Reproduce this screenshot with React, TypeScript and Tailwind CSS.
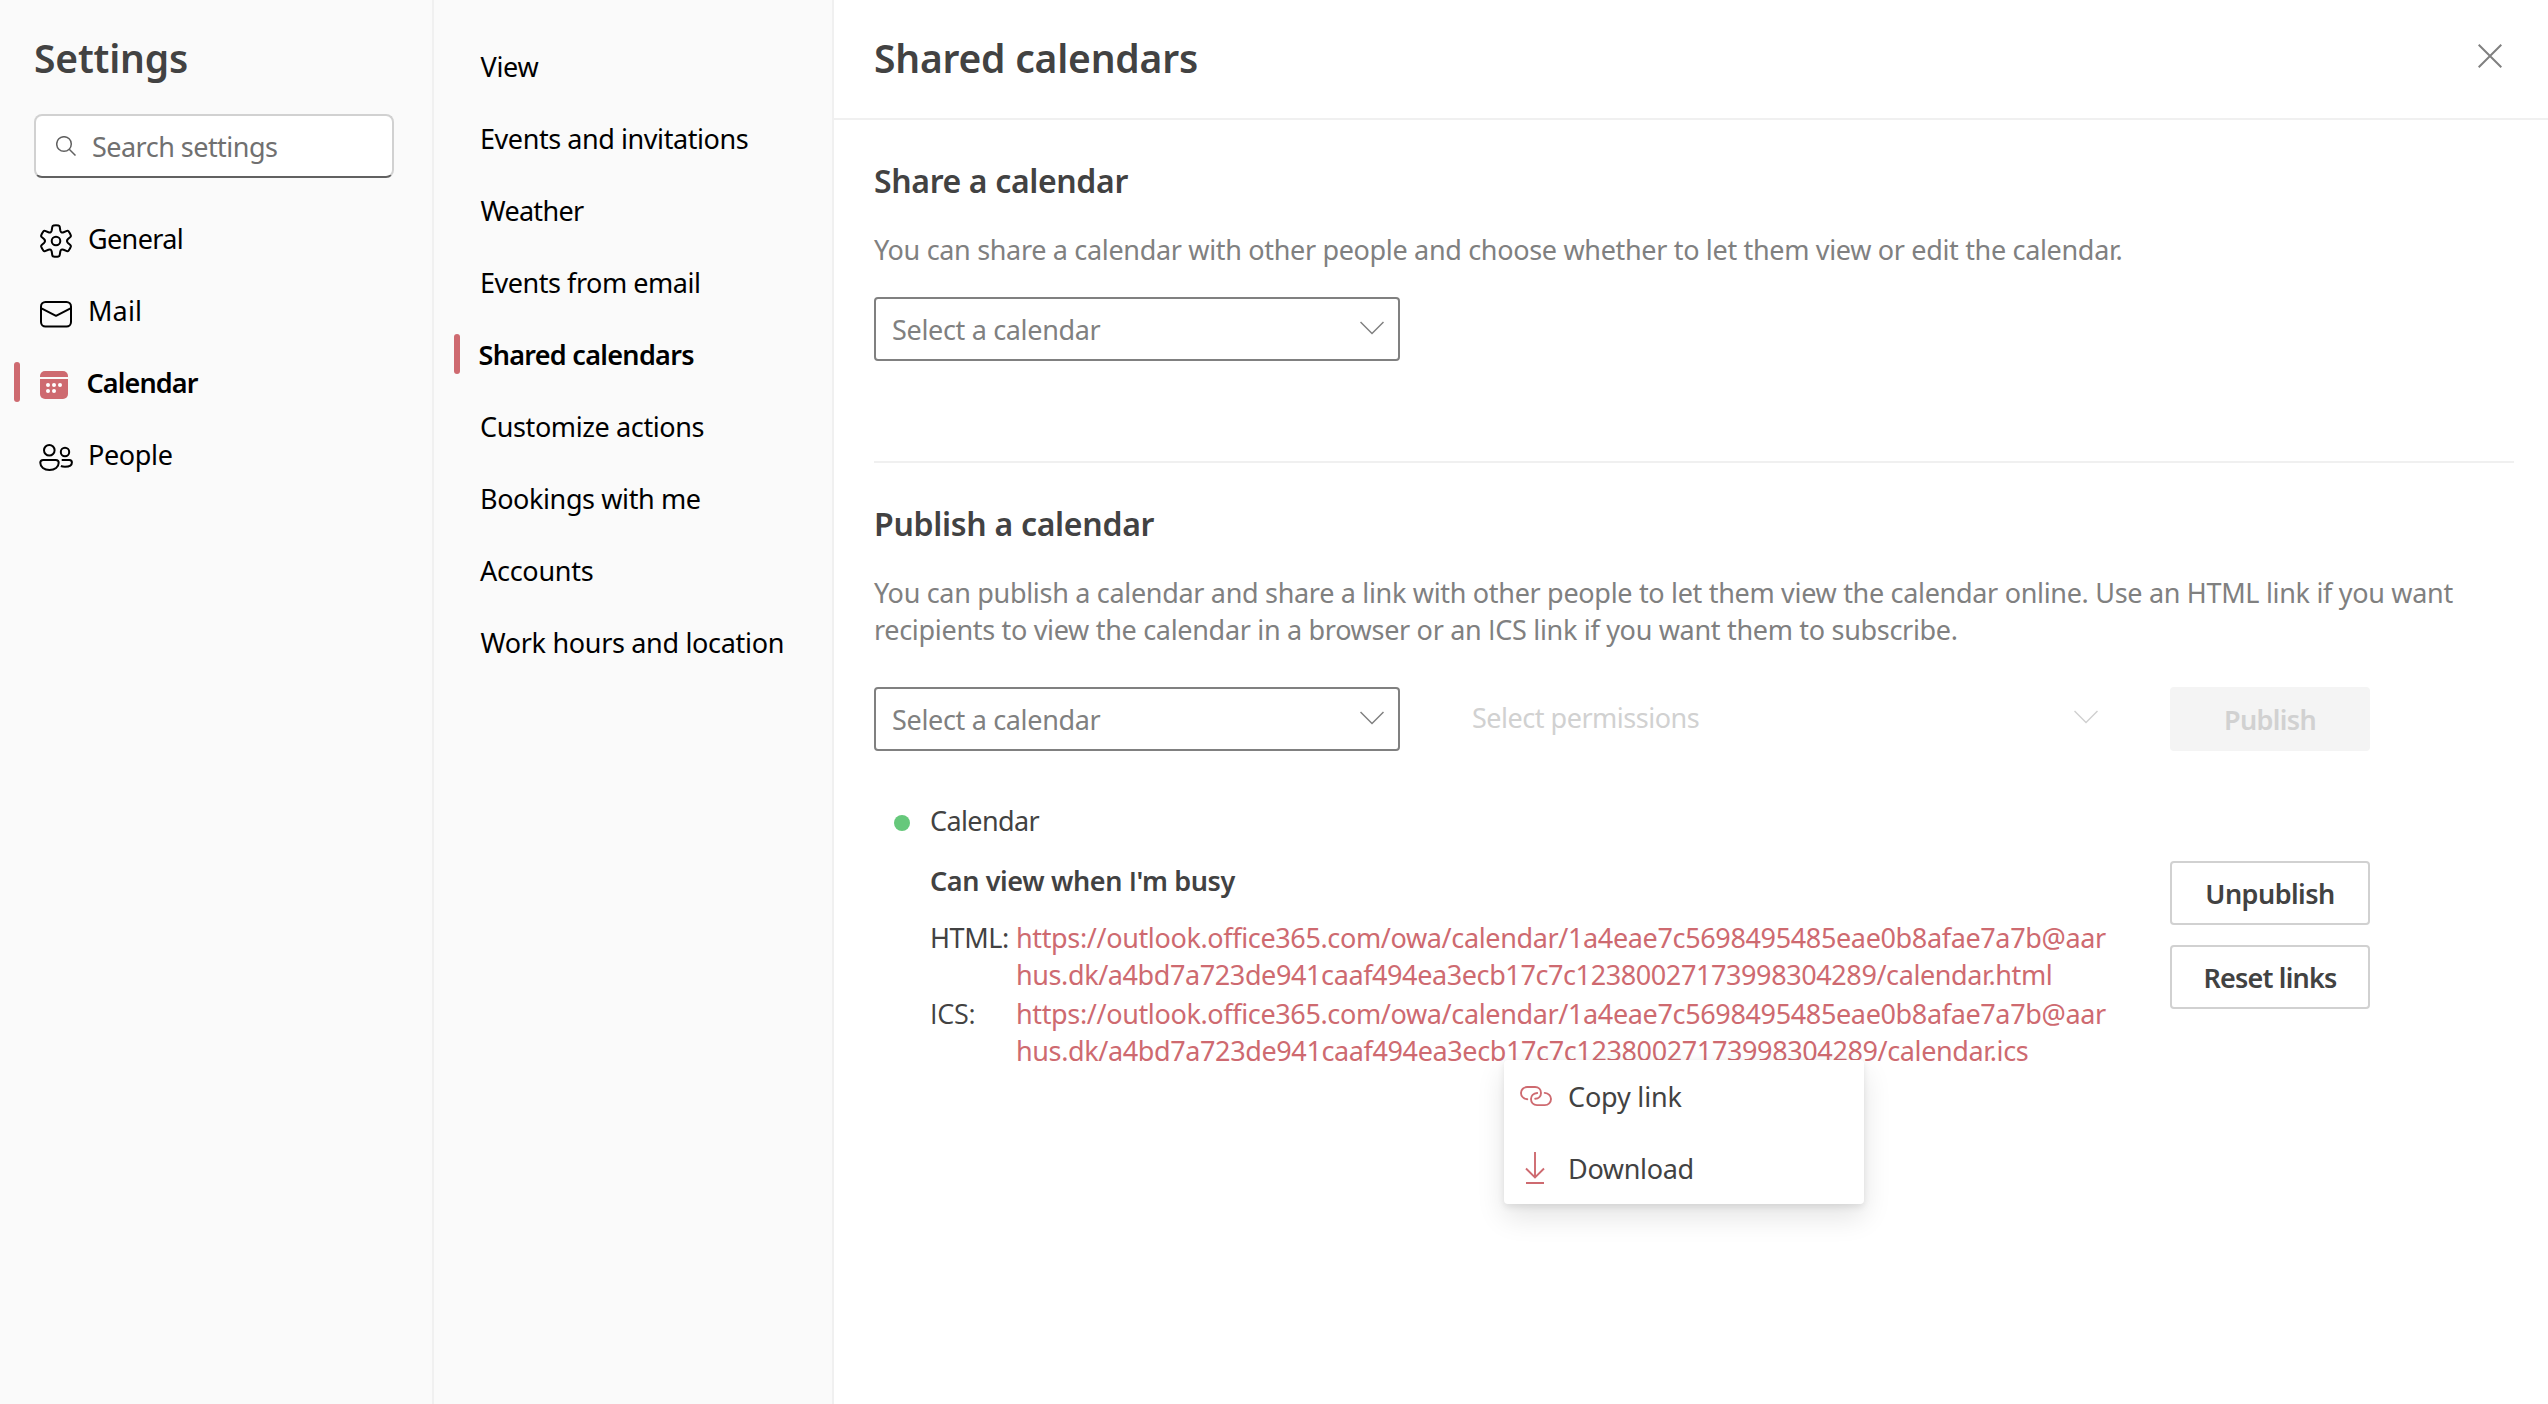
import type { ReactNode } from 'react';

const RED = '#ce6a70';

function GearIcon() {
  return (
    <svg width="40" height="40" viewBox="0 0 40 40" fill="none" stroke="#000" strokeWidth="2" strokeLinejoin="round">
      <path d="M17.5 4.500Q20 4 22.500 4.500Q23.500 4.700 23.700 5.800L24.300 9.500Q24.900 12.200 27.600 11.200L30.900 9.900Q31.900 9.500 32.600 10.400Q34 12.200 34.800 14.400Q35.100 15.400 34.300 16.100L32 18Q30 20 32 22L34.300 23.900Q35.100 24.600 34.800 25.600Q34 27.800 32.600 29.600Q31.900 30.500 30.900 30.100L27.600 28.800Q24.900 27.800 24.300 30.500L23.700 34.200Q23.500 35.300 22.500 35.500Q20 36 17.500 35.500Q16.500 35.300 16.300 34.200L15.700 30.500Q15.100 27.800 12.400 28.800L9.100 30.100Q8.100 30.500 7.400 29.600Q6 27.800 5.200 25.600Q4.900 24.600 5.700 23.900L8 22Q10 20 8 18L5.700 16.100Q4.900 15.400 5.200 14.400Q6 12.200 7.400 10.400Q8.100 9.500 9.100 9.900L12.400 11.200Q15.100 12.200 15.700 9.500L16.300 5.800Q16.500 4.700 17.500 4.500Z" />
      <circle cx="20" cy="20" r="4.300" />
    </svg>
  );
}

function MailIcon() {
  return (
    <svg width="40" height="40" viewBox="0 0 40 40" fill="none" stroke="#000" strokeWidth="2" strokeLinejoin="round">
      <rect x="5" y="9" width="30" height="24.5" rx="4.5" />
      <path d="M5 15.2L20 22.8L35 15.2" />
    </svg>
  );
}

function CalendarIcon() {
  return (
    <svg width="40" height="40" viewBox="0 0 40 40" fill={RED}>
      <path d="M4 12V11a5 5 0 0 1 5-5H27a5 5 0 0 1 5 5V12Z" />
      <path d="M4 14H32V29a5 5 0 0 1-5 5H9a5 5 0 0 1-5-5Z" />
      <g fill="#fff">
        <circle cx="12" cy="20" r="2" />
        <circle cx="18" cy="20" r="2" />
        <circle cx="24" cy="20" r="2" />
        <circle cx="12" cy="26" r="2" />
        <circle cx="18" cy="26" r="2" />
      </g>
    </svg>
  );
}

function PeopleIcon() {
  return (
    <svg width="40" height="40" viewBox="0 0 40 40" fill="none" stroke="#000" strokeWidth="2">
      <circle cx="13.3" cy="13.3" r="5.3" />
      <circle cx="29" cy="15" r="4.2" />
      <path d="M7.2 22.9H19.8a2.9 2.9 0 0 1 2.9 2.9C22.7 30 18.9 32.9 13.5 32.9S4.3 30 4.3 25.8A2.9 2.9 0 0 1 7.2 22.9Z" />
      <path d="M25.7 22.9H33.4a2.5 2.5 0 0 1 2.5 2.5C35.9 28.200 33.2 29.700 29 29.700C27.400 29.700 26 29.500 24.900 29" />
    </svg>
  );
}

function Chevron({ color }: { color: string }) {
  return (
    <svg width="24" height="14" viewBox="0 0 24 14" fill="none" stroke={color} strokeWidth="1.5">
      <path d="M0.500 1L12 12.500L23.500 1" />
    </svg>
  );
}

function CopyLinkIcon() {
  return (
    <svg className="mt-0.5" width="32" height="22" viewBox="0 0 32 22" fill="none" stroke={RED} strokeWidth="1.9" strokeLinecap="round">
      <path d="M7.300 13.200C3.500 12.800 1 10 1 7C1 3.600 3.700 1 7.200 1H15C18.600 1 21 3.600 21 7C21 10.200 18.600 12.600 15.200 12.800" />
      <path d="M24.700 6.900C28.500 7.200 31 10 31 13C31 16.400 28.300 19.100 24.800 19.100H17C13.400 19.100 11 16.400 11 13C11 9.800 13.400 7.300 17.200 7" />
    </svg>
  );
}

function DownloadIcon() {
  return (
    <svg width="32" height="34" viewBox="0 0 32 34" fill="none" stroke={RED} strokeWidth="1.9">
      <path d="M15 1V26.500M6 17.500L15 26.500L24 17.500M6 32H24" />
    </svg>
  );
}

/* Capital I without slab serifs */
function PlainI() {
  return <span className="font-['Open_Sans',sans-serif]">I</span>;
}

type Item = { label: string; text: string; icon?: ReactNode; active?: boolean };

const areas: Item[] = [
  { label: 'General', text: 'ml-[12px] tracking-[-0.643px]', icon: <GearIcon /> },
  { label: 'Mail', text: 'ml-[12px] tracking-[0.133px]', icon: <MailIcon /> },
  { label: 'Calendar', text: 'ml-[10.500px] tracking-[-0.869px]', icon: <CalendarIcon />, active: true },
  { label: 'People', text: 'ml-[12px] tracking-[-0.354px]', icon: <PeopleIcon /> },
];

const pages: Item[] = [
  { label: 'View', text: 'ml-[20.500px] tracking-[-0.285px]' },
  { label: 'Events and invitations', text: 'ml-[20px] tracking-[-0.432px]' },
  { label: 'Weather', text: 'ml-[20.500px] tracking-[-0.690px]' },
  { label: 'Events from email', text: 'ml-[20px] tracking-[-0.464px]' },
  { label: 'Shared calendars', text: 'ml-[18.500px] tracking-[-0.700px]', active: true },
  { label: 'Customize actions', text: 'ml-[20px] tracking-[-0.385px]' },
  { label: 'Bookings with me', text: 'ml-[20px] tracking-[-0.400px]' },
  { label: 'Accounts', text: 'ml-[20px] tracking-[-0.275px]' },
  { label: 'Work hours and location', text: 'ml-[20.500px] tracking-[-0.320px]' },
];

function NavRow({ item }: { item: Item }) {
  return (
    <li className="flex h-[72px] items-center">
      <span className={item.active ? 'h-10 w-1.5 shrink-0 rounded-full bg-[#ce6a70]' : 'h-10 w-1.5 shrink-0'} />
      {item.icon && <span className="ml-4 mt-1.5 shrink-0">{item.icon}</span>}
      <span className={`pt-px whitespace-nowrap ${item.active ? 'font-semibold' : ''} ${item.text}`}>{item.label}</span>
    </li>
  );
}

function CalendarSelect() {
  return (
    <button className="flex h-16 w-[526px] shrink-0 items-center justify-between rounded border-2 border-[#808080] bg-white pt-px pr-3.5 pl-4 text-[#808080]">
      <span className="tracking-[-0.330px]">Select a calendar</span>
      <span className="-mt-1">
        <Chevron color="#808080" />
      </span>
    </button>
  );
}

function OutlineButton({ children }: { children: ReactNode }) {
  return (
    <button className="flex h-16 w-[200px] items-center justify-center rounded border-2 border-[#d1d1d1] bg-white pt-px font-semibold text-[#424242]">
      {children}
    </button>
  );
}

function LinkMenu() {
  return (
    <div className="absolute top-[65px] left-[488px] w-[360px] rounded bg-white tracking-normal text-[#424242] shadow-[0_12.8px_28.8px_rgba(0,0,0,0.11),0_2.4px_7.2px_rgba(0,0,0,0.09)]">
      <div className="flex h-[72px] items-center pl-4">
        <CopyLinkIcon />
        <span className="ml-4 pt-px tracking-[-0.180px]">Copy link</span>
      </div>
      <div className="flex h-[72px] items-center pl-4">
        <DownloadIcon />
        <span className="ml-4 pt-px tracking-[-0.323px]">Download</span>
      </div>
    </div>
  );
}

export default function App() {
  return (
    <div className="flex h-[1404px] w-[2548px] overflow-hidden bg-white font-['Noto_Sans',sans-serif] text-[27px] leading-[37px] text-black">
      <aside className="w-[434px] shrink-0 border-r-2 border-[#f0f0f0] bg-[#fafafa]">
        <h1 className="mt-[31px] ml-[34px] text-[39px] leading-[53px] font-semibold tracking-[-0.180px] text-[#424242]">Settings</h1>
        <div className="mt-[30px] ml-[34px] flex h-16 w-[360px] items-center rounded-lg border-2 border-[#d1d1d1] border-b-[#616161] bg-white pt-px pl-5 text-[#707070]">
          <svg className="mb-0.5" width="20" height="20" viewBox="0 0 20 20" fill="none" stroke="#616161" strokeWidth="1.500">
            <circle cx="8" cy="8" r="7.300" />
            <path d="M13.200 13.200L19.500 19.500" />
          </svg>
          <span className="ml-4 tracking-[-0.528px]">Search settings</span>
        </div>
        <ul className="mt-6 pl-3.5">
          {areas.map((item) => (
            <NavRow key={item.label} item={item} />
          ))}
        </ul>
      </aside>

      <nav className="w-[400px] shrink-0 border-r-2 border-[#f0f0f0] bg-[#fafafa]">
        <ul className="pt-[30px] pl-5">
          {pages.map((item) => (
            <NavRow key={item.label} item={item} />
          ))}
        </ul>
      </nav>

      <main className="min-w-0 flex-1">
        <header className="flex h-[120px] items-start justify-between border-b-2 border-[#f0f0f0] pr-[46px] pl-10">
          <h1 className="mt-[31px] text-[39px] leading-[53px] font-semibold tracking-[-0.203px] text-[#424242]">Shared calendars</h1>
          <svg className="mt-11" width="24" height="24" viewBox="0 0 24 24" fill="none" stroke="#808080" strokeWidth="2">
            <path d="M0.700 0.700L23.300 23.300M23.300 0.700L0.700 23.300" />
          </svg>
        </header>

        <div className="pr-[34px] pl-10">
          <section className="border-b-2 border-[#f0f0f0] pt-[39px] pb-[100px]">
            <h2 className="text-[32px] leading-[43px] font-semibold tracking-[-0.359px] text-[#424242]">Share a calendar</h2>
            <p className="mt-[29px] mb-[29px] tracking-[-0.330px] whitespace-nowrap text-[#808080]">
              You can share a calendar with other people and choose whether to let them view or edit the calendar.
            </p>
            <CalendarSelect />
          </section>

          <section className="pt-[39px]">
            <h2 className="text-[32px] leading-[43px] font-semibold tracking-[-0.290px] text-[#424242]">Publish a calendar</h2>
            <p className="mt-[29px] tracking-[-0.315px] whitespace-nowrap text-[#808080]">
              You can publish a calendar and share a link with other people to let them view the calendar online. Use an HTML link if you want
              <br />
              <span className="tracking-[-0.312px]">
                recipients to view the calendar in a browser or an <PlainI />CS link if you want them to subscribe.
              </span>
            </p>

            <div className="mt-[39px] flex">
              <CalendarSelect />
              <div className="ml-[72px] flex h-16 w-[626px] items-center justify-between text-[#d1d1d1]">
                <span className="pb-[3px] tracking-[-0.489px]">Select permissions</span>
                <span className="-mt-1">
                  <Chevron color="#d1d1d1" />
                </span>
              </div>
              <button className="ml-[72px] flex h-16 w-[200px] items-center justify-center rounded bg-[#f4f4f4] pt-px font-semibold tracking-[-0.654px] text-[#d1d1d1]">
                Publish
              </button>
            </div>

            <div className="mt-[51px] flex pl-5 text-[#424242]">
              <span className="mt-[13px] size-4 shrink-0 rounded-full bg-[#66c87b]" />
              <div className="ml-5">
                <p className="tracking-[-0.620px]">Calendar</p>
                <p className="mt-[23px] font-semibold tracking-[-0.386px]">
                  Can view when <PlainI />'m busy
                </p>
                <dl className="mt-5 grid grid-cols-[86px_auto] gap-y-0.5 whitespace-nowrap">
                  <dt className="tracking-[-0.400px]">HTML:</dt>
                  <dd className="text-[#ce6a70]">
                    <span className="tracking-[-0.360px]">https://outlook.office365.com/owa/calendar/1a4eae7c5698495485eae0b8afae7a7b@aar</span>
                    <br />
                    <span className="tracking-[-0.401px]">hus.dk/a4bd7a723de941caaf494ea3ecb17c7c12380027173998304289/calendar.html</span>
                  </dd>
                  <dt className="h-[74px] font-['Open_Sans',sans-serif] tracking-[-0.318px]">ICS:</dt>
                  <dd className="relative text-[#ce6a70]">
                    <span className="tracking-[-0.360px]">https://outlook.office365.com/owa/calendar/1a4eae7c5698495485eae0b8afae7a7b@aar</span>
                    <br />
                    <span className="tracking-[-0.382px]">hus.dk/a4bd7a723de941caaf494ea3ecb17c7c12380027173998304289/calendar.ics</span>
                    <LinkMenu />
                  </dd>
                </dl>
              </div>
              <div className="mt-[59px] mr-[144px] ml-auto flex flex-col gap-5">
                <OutlineButton>
                  <span className="tracking-[-0.540px]">Unpublish</span>
                </OutlineButton>
                <OutlineButton>
                  <span className="tracking-[-0.803px]">Reset links</span>
                </OutlineButton>
              </div>
            </div>
          </section>
        </div>
      </main>
    </div>
  );
}
